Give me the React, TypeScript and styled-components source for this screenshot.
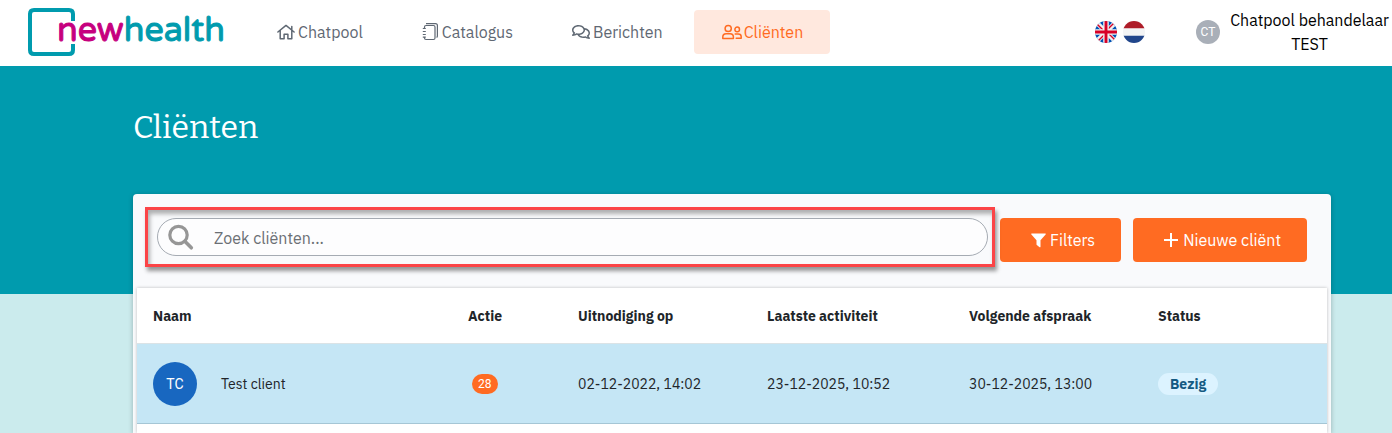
import React from 'react';
import styled, { createGlobalStyle } from 'styled-components';
import { FaRegComments } from 'react-icons/fa';

const GlobalStyle = createGlobalStyle`
  *, *::before, *::after { box-sizing: border-box; }
  body {
    margin: 0;
    background: #cbebed;
    color: #212529;
    font-family: "IBM Plex Sans", Inter, "Noto Sans", sans-serif;
    font-size: 16px;
    line-height: 24px;
  }
`;

const Page = styled.div`
  display: flex;
  flex-direction: column;
  min-height: 100vh;
`;

const Header = styled.header`
  display: flex;
  align-items: center;
  height: 66px;
  padding: 0 3px 2px 28px;
  background: #fff;
`;

const Logo = styled.a`
  display: block;
  flex: none;
  width: 198px;
  height: 48px;
  margin-right: 23px;
  svg { display: block; overflow: visible; }
`;

const LogoText = styled.text`
  font-family: "Varela Round", Nunito, Lato, sans-serif;
  font-size: 34px;
  font-weight: 400;
  stroke-width: 1px;
`;

const Nav = styled.nav`
  display: flex;
  gap: 4px;
`;

const NavLink = styled.a<{ $active?: boolean }>`
  display: flex;
  align-items: center;
  gap: 3px;
  height: 44px;
  padding: 0 27px 0 28px;
  border-radius: 4px;
  background: ${(p) => (p.$active ? '#ffe8de' : 'transparent')};
  color: ${(p) => (p.$active ? '#ff6b22' : '#5f6873')};
  text-decoration: none;
  white-space: nowrap;
  svg { flex: none; }
`;

const Languages = styled.div`
  display: flex;
  gap: 6px;
  margin-left: auto;
`;

const FlagButton = styled.button`
  width: 22px;
  height: 22px;
  padding: 0;
  border: 0;
  border-radius: 50%;
  background: none;
  cursor: pointer;
  svg { display: block; }
`;

const UserMenu = styled.button`
  display: flex;
  align-items: center;
  gap: 10px;
  width: 193px;
  margin-left: 51px;
  padding: 0;
  border: 0;
  background: none;
  color: #000;
  font: inherit;
  cursor: pointer;
`;

const UserName = styled.span`
  flex: 1;
  text-align: center;
`;

const Avatar = styled.span<{ $size: number; $color: string; $font: number }>`
  display: flex;
  flex: none;
  align-items: center;
  justify-content: center;
  width: ${(p) => p.$size}px;
  height: ${(p) => p.$size}px;
  border-radius: 50%;
  background: ${(p) => p.$color};
  color: #fff;
  font-size: ${(p) => p.$font}px;
  font-family: Roboto, sans-serif;
`;

const Main = styled.main`
  display: flex;
  flex: 1;
  flex-direction: column;
  padding: 41px 61px 0 133px;
  background: linear-gradient(#009bae 228px, #cbebed 228px);
`;

const Title = styled.h1`
  margin: 0 0 47px;
  color: #fff;
  font-family: Bitter, "DejaVu Serif Condensed", "DejaVu Serif", serif;
  font-size: 32px;
  font-weight: 400;
  line-height: 40px;
`;

const Card = styled.section`
  display: flex;
  flex: 1;
  flex-direction: column;
  padding: 0 4px;
  border-radius: 4px 4px 0 0;
  background: #f9fafc;
  box-shadow: 0 1px 5px rgba(0, 0, 0, 0.25);
`;

const Toolbar = styled.div`
  display: flex;
  gap: 12px;
  padding: 24px 20px 26px;
`;

const SearchField = styled.label`
  position: relative;
  display: flex;
  flex: 1;
  align-items: center;
  height: 38px;
  border: 1px solid #a5abb3;
  border-radius: 19px;
  background: #fdfdfe;
  padding: 0 12px 0 9px;
  gap: 20px;
`;

const Highlight = styled.span`
  position: absolute;
  inset: -12px -8px -12px -13px;
  border: 3px solid #fb4447;
  box-shadow: 2px 4px 4px rgba(0, 0, 0, 0.4), inset 2px 4px 4px rgba(0, 0, 0, 0.3);
  pointer-events: none;
`;

const SearchInput = styled.input`
  flex: 1;
  min-width: 0;
  height: 32px;
  padding: 2px 0 0;
  border: 0;
  outline: 0;
  background: none;
  color: #212529;
  font: inherit;
  &::placeholder { color: #6b6f74; opacity: 1; }
`;

const ActionButton = styled.button`
  display: flex;
  align-items: center;
  gap: 4px;
  height: 44px;
  padding: 0 26px 0 31px;
  border: 0;
  border-radius: 4px;
  background: #ff6b22;
  color: #fff;
  font: inherit;
  white-space: nowrap;
  cursor: pointer;
`;

const TablePanel = styled.div`
  flex: 1;
  background: #fff;
  box-shadow: 0 0 3px rgba(0, 0, 0, 0.25);
`;

const Table = styled.table`
  width: 100%;
  table-layout: fixed;
  border-collapse: collapse;
  font-size: 14px;
  line-height: 20px;
`;

const Col = styled.col<{ $width?: number }>`
  width: ${(p) => (p.$width ? `${p.$width}px` : 'auto')};
`;

const HeadCell = styled.th`
  height: 55px;
  padding: 2px 0 0 16px;
  font-weight: 700;
  text-align: left;
  white-space: nowrap;
`;

const Row = styled.tr`
  border-top: 1px solid #dbe3e6;
  border-bottom: 1px solid #a5c6d5;
  background: #c5e6f5;
`;

const Cell = styled.td`
  height: 80px;
  padding: 2px 0 0 16px;
  white-space: nowrap;
`;

const Client = styled.div`
  display: flex;
  align-items: center;
  gap: 24px;
`;

const CountBadge = styled.span`
  display: inline-block;
  margin-left: 4px;
  padding: 0 6px;
  border-radius: 10px;
  background: #ff6b22;
  color: #fff;
  font-family: Roboto, sans-serif;
  font-size: 12px;
  vertical-align: top;
`;

const StatusPill = styled.span`
  display: inline-block;
  padding: 1px 12px;
  border-radius: 11px;
  background: #dcf3ff;
  color: #145a82;
  font-weight: 700;
`;

const HouseIcon = () => (
  <svg width="18" height="16" viewBox="0 0 18 16" fill="none" stroke="currentColor" strokeWidth="1.5" strokeLinejoin="round" strokeLinecap="round" aria-hidden="true">
    <path d="M.9 8 9 1.400 17.100 8M3.200 6.500v8.300h3.900v-4.500h3.800v4.500h3.900V6.500M14.800 5.600V2.400" />
  </svg>
);

const NotebookIcon = () => (
  <svg width="17" height="18" viewBox="0 0 17 18" fill="none" stroke="currentColor" strokeWidth="1.200" strokeLinejoin="round" aria-hidden="true">
    <path d="M2.500 5V4q0-1.500 1.500-1.500h7.500q1.500 0 1.500 1.500v11q0 1.500-1.500 1.500H4q-1.500 0-1.500-1.500v-.5M4 .600h9.500q1.900 0 1.900 1.900v10.500q0 1-.8 1.500M.8 5.500h3M.8 8.500h3M.8 11.500h3M.8 14.200h3" />
  </svg>
);

const ClientsIcon = () => (
  <svg width="19" height="16" viewBox="0 0 19 16" overflow="visible" fill="none" stroke="currentColor" strokeWidth="1.500" strokeLinejoin="round" strokeLinecap="round" aria-hidden="true">
    <circle cx="6.200" cy="4.500" r="3.100" />
    <path d="M.8 14.400v-1.300q0-3.300 3.300-3.300h4q3.300 0 3.300 3.300v1.300z" />
    <circle cx="15.200" cy="5.400" r="2.300" />
    <path d="M13.200 10h3q3 0 3 2.700v1.600h-5" />
  </svg>
);

const SearchIcon = () => (
  <svg width="27" height="27" viewBox="0 0 27 27" fill="none" stroke="#969696" aria-hidden="true">
    <circle cx="11.500" cy="11" r="8.700" strokeWidth="3.200" />
    <path d="m17.800 17.300 6.500 6.500" strokeWidth="3.600" strokeLinecap="round" />
  </svg>
);

const FunnelIcon = () => (
  <svg width="15" height="15" viewBox="0 0 15 15" fill="currentColor" aria-hidden="true">
    <path d="M.6.500h13.800q.8.300.2 1L9.500 7.200v6.600q-.2.800-.9.400L5.800 12q-.3-.3-.3-.7V7.200L.4 1.500Q-.2.800.6.500z" />
  </svg>
);

const PlusIcon = () => (
  <svg width="15" height="15" viewBox="0 0 15 15" stroke="currentColor" strokeWidth="2" aria-hidden="true">
    <path d="M7 0v14M0 7h14" />
  </svg>
);

const BritishFlag = () => (
  <svg width="22" height="22" viewBox="0 0 22 22" aria-hidden="true">
    <defs><clipPath id="uk"><circle cx="11" cy="11" r="11" /></clipPath></defs>
    <g clipPath="url(#uk)">
      <path fill="#0052b4" d="M0 0h22v22H0z" />
      <path stroke="#f0f0f0" strokeWidth="4.500" d="m0 0 22 22M22 0 0 22" />
      <path stroke="#d80027" strokeWidth="1.400" d="m0 1 10 10M12 11l10 10M21 0 11 10M11 12 1 22" />
      <path stroke="#f0f0f0" strokeWidth="5.600" d="M11 0v22M0 11h22" />
      <path stroke="#d80027" strokeWidth="2.900" d="M11 0v22M0 11h22" />
    </g>
  </svg>
);

const DutchFlag = () => (
  <svg width="22" height="22" viewBox="0 0 22 22" aria-hidden="true">
    <defs><clipPath id="nl"><circle cx="11" cy="11" r="11" /></clipPath></defs>
    <g clipPath="url(#nl)">
      <path fill="#f3f4f5" d="M0 0h22v22H0z" />
      <path fill="#ae1c28" d="M0 0h22v7.300H0z" />
      <path fill="#21468b" d="M0 14.700h22V22H0z" />
    </g>
  </svg>
);

const clients = [
  {
    initials: 'TC',
    name: 'Test client',
    actions: 28,
    invited: '02-12-2022, 14:02',
    lastActivity: '23-12-2025, 10:52',
    nextAppointment: '30-12-2025, 13:00',
    status: 'Bezig',
  },
];

export default function App() {
  return (
    <Page>
      <GlobalStyle />
      <Header>
        <Logo href="#" aria-label="newhealth">
          <svg width="198" height="48" viewBox="0 0 198 48">
            <path d="M45 13V6q0-4-4-4H6Q2 2 2 6v36q0 4 4 4h35q4 0 4-4v-6" fill="none" stroke="#009bae" strokeWidth="4" />
            <LogoText x="29" y="33">
              <tspan fill="#c6007e" stroke="#c6007e">new</tspan>
              <tspan fill="#009bae" stroke="#009bae">health</tspan>
            </LogoText>
          </svg>
        </Logo>
        <Nav>
          <NavLink href="#"><HouseIcon />Chatpool</NavLink>
          <NavLink href="#"><NotebookIcon />Catalogus</NavLink>
          <NavLink href="#"><FaRegComments size={18} />Berichten</NavLink>
          <NavLink href="#" $active aria-current="page"><ClientsIcon />Cliënten</NavLink>
        </Nav>
        <Languages>
          <FlagButton aria-label="English"><BritishFlag /></FlagButton>
          <FlagButton aria-label="Nederlands"><DutchFlag /></FlagButton>
        </Languages>
        <UserMenu>
          <Avatar $size={24} $color="#a9afb8" $font={12}>CT</Avatar>
          <UserName>Chatpool behandelaar TEST</UserName>
        </UserMenu>
      </Header>
      <Main>
        <Title>Cliënten</Title>
        <Card>
          <Toolbar>
            <SearchField>
              <SearchIcon />
              <SearchInput type="search" placeholder="Zoek cliënten..." aria-label="Zoek cliënten" />
              <Highlight />
            </SearchField>
            <ActionButton><FunnelIcon />Filters</ActionButton>
            <ActionButton><PlusIcon />Nieuwe cliënt</ActionButton>
          </Toolbar>
          <TablePanel>
            <Table>
              <colgroup>
                <Col />
                <Col $width={110} />
                <Col $width={189} />
                <Col $width={202} />
                <Col $width={189} />
                <Col $width={185} />
              </colgroup>
              <thead>
                <tr>
                  <HeadCell>Naam</HeadCell>
                  <HeadCell>Actie</HeadCell>
                  <HeadCell>Uitnodiging op</HeadCell>
                  <HeadCell>Laatste activiteit</HeadCell>
                  <HeadCell>Volgende afspraak</HeadCell>
                  <HeadCell>Status</HeadCell>
                </tr>
              </thead>
              <tbody>
                {clients.map((c) => (
                  <Row key={c.name}>
                    <Cell>
                      <Client>
                        <Avatar $size={44} $color="#1867c0" $font={14}>{c.initials}</Avatar>
                        {c.name}
                      </Client>
                    </Cell>
                    <Cell><CountBadge>{c.actions}</CountBadge></Cell>
                    <Cell>{c.invited}</Cell>
                    <Cell>{c.lastActivity}</Cell>
                    <Cell>{c.nextAppointment}</Cell>
                    <Cell><StatusPill>{c.status}</StatusPill></Cell>
                  </Row>
                ))}
              </tbody>
            </Table>
          </TablePanel>
        </Card>
      </Main>
    </Page>
  );
}
